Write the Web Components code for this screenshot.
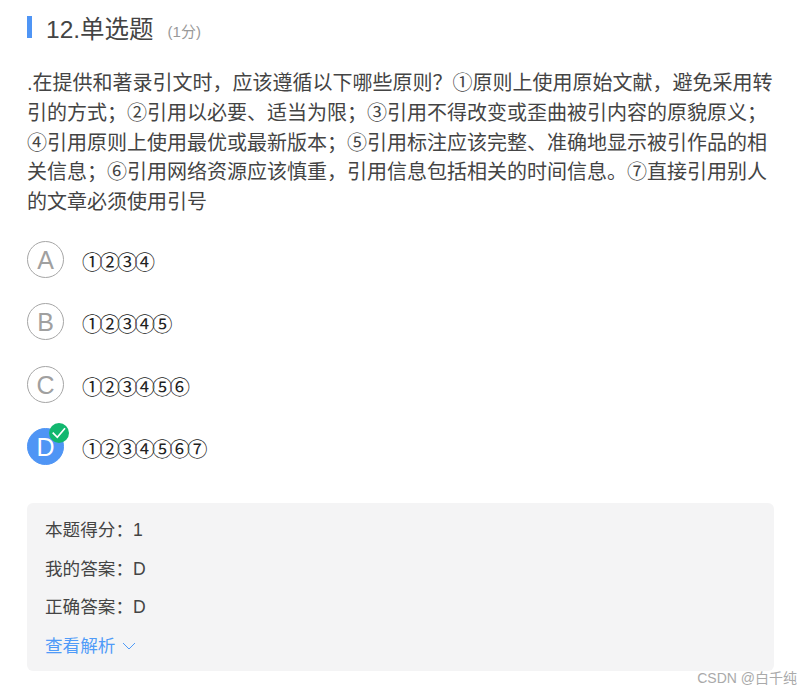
<!DOCTYPE html>
<html lang="zh">
<head>
<meta charset="utf-8">
<title>单选题</title>
<style>
  html, body { margin: 0; background: #fff; }
  body { font-family: "Liberation Sans", "Noto Sans CJK SC", sans-serif; color: #444; }
</style>
</head>
<body>
<question-card>
  <question-title slot="title" label="12.单选题" score="(1分)"></question-title>
  .在提供和著录引文时，应该遵循以下哪些原则？①原则上使用原始文献，避免采用转引的方式；②引用以必要、适当为限；③引用不得改变或歪曲被引内容的原貌原义；④引用原则上使用最优或最新版本；⑤引用标注应该完整、准确地显示被引作品的相关信息；⑥引用网络资源应该慎重，引用信息包括相关的时间信息。⑦直接引用别人的文章必须使用引号
  <answer-option slot="options" letter="A">①②③④</answer-option>
  <answer-option slot="options" letter="B">①②③④⑤</answer-option>
  <answer-option slot="options" letter="C">①②③④⑤⑥</answer-option>
  <answer-option slot="options" letter="D" selected>①②③④⑤⑥⑦</answer-option>
  <result-panel slot="result">
    <div>本题得分：1</div>
    <div>我的答案：D</div>
    <div>正确答案：D</div>
  </result-panel>
</question-card>
<script>
// Title row with the blue bar on the left
customElements.define('question-title', class extends HTMLElement {
  constructor () {
    super()
    this.attachShadow({ mode: 'open' }).innerHTML = `
      <style>
        :host { display: flex; align-items: center; height: 22px; border-left: 5px solid #4f95f5; padding-left: 14px; }
        .label { font-size: 24.5px; color: #444; padding-top: 1px; }
        .score { font-size: 15px; color: #999; margin-left: 14px; padding-top: 6px; }
      </style>
      <span class="label"></span><span class="score"></span>
    `
    this.shadowRoot.querySelector('.label').textContent = this.getAttribute('label')
    this.shadowRoot.querySelector('.score').textContent = this.getAttribute('score')
  }
})

// One answer row: round letter plus its text
customElements.define('answer-option', class extends HTMLElement {
  constructor () {
    super()
    this.attachShadow({ mode: 'open' }).innerHTML = `
      <style>
        :host { display: flex; align-items: center; height: 37px; color: #222; }
        .circle { position: relative; box-sizing: border-box; width: 37px; height: 37px; border: 1px solid #a6a6a6; border-radius: 50%; display: flex; align-items: center; justify-content: center; font-size: 25px; color: #a0a0a0; margin-right: 18px; }
        .letter { padding-top: 2px; }
        :host([selected]) .circle { background: #4f95f5; border-color: #4f95f5; color: #fff; }
        .check { display: none; position: absolute; top: -6px; right: -6px; }
        :host([selected]) .check { display: block; }
        .text { padding-top: 3px; font-size: 20.5px; letter-spacing: -3px; }
      </style>
      <div class="circle"><span class="letter"></span>
        <svg class="check" width="20" height="20" viewBox="0 0 20 20"><circle cx="10" cy="10" r="10" fill="#12b76f"/><path d="M3.7 9.7l4.6 4.6 7.7-9" fill="none" stroke="#fff" stroke-width="1.7"/></svg>
      </div>
      <div class="text"><slot></slot></div>
    `
    this.shadowRoot.querySelector('.letter').textContent = this.getAttribute('letter')
  }
})

// Grey box with the scores and the analysis link
customElements.define('result-panel', class extends HTMLElement {
  constructor () {
    super()
    this.attachShadow({ mode: 'open' }).innerHTML = `
      <style>
        :host { display: block; background: #f4f4f5; border-radius: 6px; padding: 8px 18px 6px; font-size: 17.6px; line-height: 38.5px; color: #444; }
        .more { display: flex; align-items: center; gap: 7px; color: #4f9bf8; }
      </style>
      <slot></slot>
      <div class="more">查看解析
        <svg width="14" height="8" viewBox="0 0 14 8"><path d="M1 1l6 6 6-6" fill="none" stroke="#4f9bf8" stroke-width="1"/></svg>
      </div>
    `
  }
})

// Whole question card
customElements.define('question-card', class extends HTMLElement {
  constructor () {
    super()
    this.attachShadow({ mode: 'open' }).innerHTML = `
      <style>
        :host { display: block; position: relative; box-sizing: border-box; width: 812px; height: 695px; padding: 16px 38px 0 27px; overflow: hidden; }
        .body { margin-top: 31px; font-size: 20px; line-height: 29.8px; color: #444; }
        .options { display: flex; flex-direction: column; gap: 25.5px; margin-top: 23px; }
        .result { margin-top: 38px; }
        .mark { position: absolute; right: 15px; top: 667px; font-size: 14px; color: #aaa; }
      </style>
      <slot name="title"></slot>
      <div class="body"><slot></slot></div>
      <div class="options"><slot name="options"></slot></div>
      <div class="result"><slot name="result"></slot></div>
      <div class="mark">CSDN @白千纯</div>
    `
  }
})
</script>
</body>
</html>
